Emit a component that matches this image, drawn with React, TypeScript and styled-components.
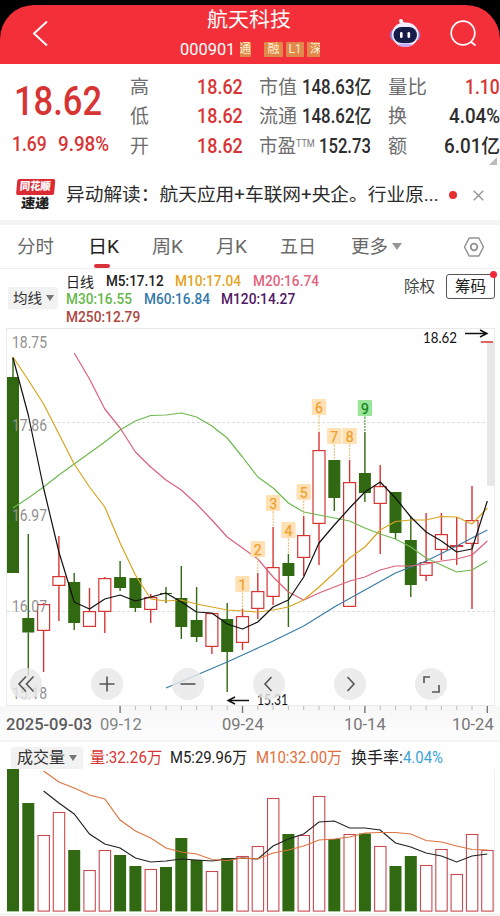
import React, { useLayoutEffect, useRef, useState } from "react";
import styled, { createGlobalStyle } from "styled-components";

const Global = createGlobalStyle`
  * { box-sizing: border-box; }
  body { margin: 0; background: #fff; font-family: Roboto, "Noto Sans CJK SC", sans-serif; color: #333; }
  button { font: inherit; color: inherit; border: 0; padding: 0; background: none; }
`;

const RED = "#d73434";
const GREEN = "#306911";

/* ---------- text that is condensed to a given width ---------- */

const FitBox = styled.span<{ $w: number; $size: number; $color?: string; $weight?: number }>`
  display: block;
  flex: none;
  width: ${(p) => p.$w}px;
  height: 18px;
  line-height: 18px;
  font-size: ${(p) => p.$size}px;
  font-weight: ${(p) => p.$weight ?? 400};
  color: ${(p) => p.$color ?? "inherit"};
  white-space: nowrap;
`;
const FitInner = styled.span`
  display: inline-block;
  transform-origin: 0 50%;
`;

type FitProps = { w: number; size: number; color?: string; weight?: number; children: React.ReactNode };
function Fit({ w, size, color, weight, children }: FitProps) {
  const ref = useRef<HTMLSpanElement>(null);
  const [k, setK] = useState(1);
  useLayoutEffect(() => {
    if (ref.current) setK(w / ref.current.offsetWidth);
  }, [w, size, children]);
  return (
    <FitBox $w={w} $size={size} $color={color} $weight={weight}>
      <FitInner ref={ref} style={{ transform: `scaleX(${k})` }}>{children}</FitInner>
    </FitBox>
  );
}

/* ---------- header ---------- */

const Page = styled.main`
  width: 500px;
  height: 916px;
  overflow: hidden;
  display: flex;
  flex-direction: column;
  background: #fff;
`;
const TopFrame = styled.div`
  background: #000;
  padding-top: 5px;
  flex: none;
`;
const Header = styled.header`
  height: 59px;
  background: #f32f3a;
  border-radius: 34px 34px 0 0;
  display: grid;
  grid-template-columns: 180px 140px 70px 58px 52px;
  align-items: center;
`;
const BackButton = styled.button`
  margin-left: 31px;
  width: 18px;
  height: 28px;
  margin-top: -4px;
`;
const TitleBlock = styled.div`
  height: 59px;
  color: #fff;
  overflow: hidden;
`;
const TitleLine = styled.div`
  padding: 6px 0 0 27px;
  height: 35px;
`;
const CodeLine = styled.div`
  display: flex;
  align-items: center;
  height: 18px;
`;
const Tag = styled.span<{ $w: number; $ml: number; $shift?: number }>`
  flex: none;
  width: ${(p) => p.$w}px;
  height: 15px;
  margin-left: ${(p) => p.$ml}px;
  border-radius: 1px;
  background: #e1894b;
  color: #ffeed0;
  font-size: 12px;
  line-height: 15px;
  overflow: hidden;
  display: flex;
  justify-content: ${(p) => (p.$shift ? "flex-start" : "center")};
  text-indent: ${(p) => p.$shift ?? 0}px;
`;
const HeadIcon = styled.button`
  height: 32px;
  margin-top: -4px;
`;

/* ---------- quote ---------- */

const Quote = styled.section`
  height: 101px;
  flex: none;
  display: grid;
  grid-template-columns: 130px 129px 129px 112px;
  position: relative;
`;
const PriceCell = styled.div`
  padding: 29px 0 0 14px;
`;
const ChangeRow = styled.div`
  display: flex;
  gap: 11px;
  margin: 24.5px 0 0 -2px;
`;
const QuoteCol = styled.div`
  padding-top: 14.5px;
`;
const QuoteRow = styled.div<{ $end: number }>`
  display: flex;
  height: 29.5px;
  justify-content: space-between;
  padding-right: ${(p) => p.$end}px;
`;
const CornerMark = styled.i`
  position: absolute;
  right: 3px;
  bottom: 0;
  border-left: 8px solid transparent;
  border-bottom: 8px solid #bbb;
`;
const LabelWithSup = styled.span`
  display: flex;
`;
const Sup = styled.span`
  display: block;
  height: 10px;
  margin-top: -3px;
`;

/* ---------- news ---------- */

const News = styled.section`
  height: 60px;
  flex: none;
  display: flex;
  align-items: center;
  border-bottom: 5px solid #f4f4f5;
  padding: 5px 0 0 16px;
`;
const Brand = styled.div`
  width: 38px;
  height: 32px;
  margin-right: 12px;
  transform: skewX(-5deg);
`;
const BrandTop = styled.div`
  height: 16px;
  background: #dc2b32;
  border-radius: 2px;
  color: #fff;
  padding-left: 3px;
  display: flex;
  align-items: center;
`;
const BrandBottom = styled.div`
  height: 15px;
  padding-left: 6px;
  display: flex;
  align-items: center;
  color: #222;
`;
const NewsDot = styled.i`
  width: 8px;
  height: 8px;
  border-radius: 50%;
  background: #e5302f;
  margin: 0 16px 0 10px;
`;

/* ---------- tabs ---------- */

const Tabs = styled.nav`
  height: 44px;
  flex: none;
  display: flex;
  align-items: center;
  padding-left: 17px;
  border-bottom: 1px solid #eee;
`;
const Tab = styled.button<{ $gap: number; $active?: boolean }>`
  height: 43px;
  margin-right: ${(p) => p.$gap}px;
  color: ${(p) => (p.$active ? "#222" : "#696969")};
  display: flex;
  flex-direction: column;
  align-items: center;
  padding-top: 13px;
  text-align: left;
`;
const Underline = styled.i`
  width: 16px;
  height: 4px;
  border-radius: 2px;
  background: #d9323a;
  margin-top: 8px;
  margin-right: 4px;
`;
const Caret = styled.i<{ $s: number; $color: string }>`
  flex: none;
  border: ${(p) => p.$s}px solid transparent;
  border-top: ${(p) => p.$s * 1.5}px solid ${(p) => p.$color};
  border-bottom: 0;
`;
const HexButton = styled.button`
  margin-left: 61px;
  width: 22px;
  height: 22px;
`;

/* ---------- indicator legend ---------- */

const Legend = styled.section`
  height: 59px;
  flex: none;
  display: flex;
  padding-left: 8px;
`;
const Pill = styled.button<{ $w: number; $h: number }>`
  width: ${(p) => p.$w}px;
  height: ${(p) => p.$h}px;
  border-radius: 2px;
  background: #f2f2f2;
  display: flex;
  align-items: center;
  justify-content: center;
  gap: 4px;
  flex: none;
  text-align: left;
`;
const LegendPill = styled(Pill)`
  margin: 18px 8px 0 0;
`;
const LegendLines = styled.div`
  width: 338px;
  padding-top: 4px;
`;
const LegendLine = styled.div`
  display: flex;
  gap: 11.5px;
`;
const Rights = styled.div`
  padding-top: 9px;
  width: 42px;
`;
const ChipButton = styled.button`
  position: relative;
  margin-top: 5px;
  width: 49px;
  height: 25px;
  border: 1px solid #555;
  border-radius: 3px;
  display: flex;
  justify-content: center;
  align-items: center;
`;
const ChipDot = styled.i`
  position: absolute;
  top: -4px;
  right: -3px;
  width: 7px;
  height: 7px;
  border-radius: 50%;
  background: #f3293b;
`;

/* ---------- charts ---------- */

const ChartArea = styled.section`
  height: 378px;
  flex: none;
  position: relative;
`;
const Drawing = styled.svg`
  display: block;
  flex: none;
  overflow: visible;
  font-family: Roboto, sans-serif;
`;
const Controls = styled.div`
  position: absolute;
  left: 10px;
  top: 340px;
  display: flex;
  gap: 49px;
`;
const RoundButton = styled.button`
  width: 32px;
  height: 32px;
  border-radius: 50%;
  background: rgba(232, 232, 232, 0.82);
  display: block;
`;
const DateAxis = styled.div`
  height: 36px;
  flex: none;
  background: linear-gradient(#f7f7f7, #fdfdfd);
  border-bottom: 2px solid #f3f3f3;
`;
const Dates = styled.div`
  display: flex;
  padding-left: 6px;
  margin-top: 1px;
`;
const DateSlot = styled.div<{ $gap: number }>`
  margin-right: ${(p) => p.$gap}px;
`;
const VolumeHead = styled.div`
  height: 27px;
  flex: none;
  display: flex;
  align-items: center;
  padding: 4px 0 0 11px;
`;
const VolumeItem = styled.div<{ $ml: number }>`
  margin-left: ${(p) => p.$ml}px;
  display: flex;
`;

const X0 = 13;
const STEP = 15.3;
const cx = (i: number) => X0 + STEP * i;
const path = (ys: number[], from = 0) =>
  ys.map((y, i) => `${cx(i + from).toFixed(1)},${y}`).join(" ");

/* direction, high, body top, body bottom, low (pixel rows) */
type Candle = [number, number, number, number, number];
const candles: Candle[] = [
  [0, 357, 377, 573, 573], [0, 534, 618, 632.5, 676], [1, 604, 608, 636, 677], [1, 536, 576, 586, 621],
  [0, 573, 582, 623, 630], [1, 588, 611, 627, 627], [1, 577, 578, 612, 633], [0, 561, 577, 588, 591],
  [0, 578, 578, 608, 612], [1, 594, 597, 610, 623], [0, 587, 593, 594, 603], [0, 566, 598, 627, 639],
  [0, 587, 620, 637, 642], [1, 613, 613, 647, 654], [0, 603, 619, 652, 692], [1, 609, 616, 643, 650],
  [1, 573, 591, 609, 619], [1, 527, 567, 597, 605], [0, 554, 563, 576, 627], [1, 516, 535, 558, 576],
  [1, 432, 450, 524, 565], [0, 460, 460, 498, 511], [1, 460, 482, 607, 607], [0, 432, 473, 493, 502],
  [1, 465, 486, 504, 554], [0, 492, 492, 533, 539], [0, 516, 540, 585, 597], [1, 513, 562, 576, 581],
  [1, 513, 534, 550, 560], [1, 517, 545, 547, 565], [1, 486, 520, 544, 609],
];
candles[2] = [1, 603, 604, 631, 672];

const ma5 = [358, 415, 488, 552, 602, 609, 599, 595, 601, 597, 593, 602, 612, 613, 624, 629, 622, 607, 600, 577, 543, 525, 508, 492, 482, 498, 517, 532, 541, 552, 549, 501];
const ma10 = [357, 380, 404, 434, 464, 487, 507, 543, 575, 599, 601, 600, 604, 607, 610, 611, 612, 610, 607, 600, 587, 573, 558, 547, 530, 521.5, 520, 520, 516.5, 517, 524, 508];
const ma20 = [353, 379, 409, 428, 452, 467, 480, 490, 504, 520, 537, 548, 559, 577, 592, 600, 593, 587, 581, 577, 570, 566, 566, 564, 561, 559, 555, 541];
const ma30 = [508, 498, 487, 475, 464, 453, 442, 430, 421, 415.5, 415, 413, 417, 426, 438, 457, 477, 488, 503, 512, 515, 518, 521, 528, 534, 539, 547, 558, 565, 572, 570, 561];
const ma60 = [688, 681.5, 675, 668.5, 662, 655, 648, 641, 633.5, 626, 616.5, 607, 598.5, 590, 581.5, 573, 567, 561, 553.5, 546, 538, 530];

/* label, bar index, top of badge, end of dotted leader */
const badges: [string, number, number, number][] = [
  ["1", 15, 576, 609], ["2", 16, 541, 573], ["3", 17, 495, 527], ["4", 18, 522, 554], ["5", 19, 484, 516],
  ["6", 20, 399, 432], ["7", 21, 428, 460], ["8", 22, 428, 460], ["9", 23, 400, 432],
];
const scale: [string, number][] = [["18.75", 348], ["17.86", 431], ["16.97", 521], ["16.07", 612], ["15.18", 698.5]];

function PriceChart() {
  return (
    <Drawing width="500" height="378" viewBox="0 328 500 378">
      <path d="M6 328.5H494.5V705.5H6.5V328.5" fill="none" stroke="#e9e9e9" />
      <path d="M7 422.5H494M7 611.5H494" stroke="#dedede" strokeDasharray="3 2" />
      <rect x="487" y="342" width="7" height="144" fill="#e7e7e7" />
      {candles.map(([up, hi, top, bot, lo], i) => {
        const x = cx(i);
        const c = up ? RED : GREEN;
        return (
          <g key={i} stroke={c} strokeWidth="1.4">
            <path d={`M${x} ${hi}V${top}M${x} ${bot}V${lo}`} />
            {up ? (
              <rect x={x - 6} y={top + 0.6} width="12" height={Math.max(bot - top - 1.2, 0.8)} fill="#fff" strokeWidth="1.2" />
            ) : (
              <rect x={x - 6} y={top} width="12" height={bot - top} fill={GREEN} stroke="none" />
            )}
          </g>
        );
      })}
      <path d="M481 342H493" stroke={RED} strokeWidth="1.5" />
      <g fill="#909090" fontSize="16">
        {scale.map(([t, y]) => (
          <text key={t} x="12" y={y} textLength="35" lengthAdjust="spacingAndGlyphs">{t}</text>
        ))}
      </g>
      <g fill="none" strokeWidth="1.2" strokeLinejoin="round">
        <polyline points={path(ma60, 10)} stroke="#397da5" />
        <polyline points={path(ma30)} stroke="#6fb84f" />
        <polyline points={path(ma20, 4)} stroke="#dc617c" />
        <polyline points={path(ma10)} stroke="#d9a520" />
        <polyline points={path(ma5)} stroke="#111" />
      </g>
      {badges.map(([t, i, y, end]) => {
        const x = cx(i);
        const green = t === "9";
        return (
          <g key={t}>
            <path d={`M${x} ${y + 17}V${end}`} stroke={green ? "#306911" : "#e9b660"} strokeWidth="0.9" strokeDasharray="2 1" />
            <path
              d={`M${x - 6} ${y}h12q1.2 0 1.2 1.2v13.6q0 1.2-1.2 1.2h-4.5l-1.5 1.8l-1.5-1.8h-4.5q-1.2 0-1.2-1.2v-13.6q0-1.2 1.2-1.2z`}
              fill={green ? "#9be59a" : "#ffe1b5"}
            />
            <text x={x} y={y + 13.5} textAnchor="middle" fontSize="14" fontWeight="400" stroke={green ? "#0f851c" : "#efa02e"} strokeWidth="0.25" fill={green ? "#0f851c" : "#efa02e"}>{t}</text>
          </g>
        );
      })}
      <g fontFamily="Lato, sans-serif" fontSize="15" fill="#111">
        <text x="423" y="342.5" textLength="34" lengthAdjust="spacingAndGlyphs">18.62</text>
        <text x="257" y="705" textLength="31" lengthAdjust="spacingAndGlyphs">15.31</text>
      </g>
      <path d="M465 333.5H487M480 330L487 333.5L480 337M249 700.5H228M235 697L228 700.5L235 704" fill="none" stroke="#111" strokeWidth="1.4" />
    </Drawing>
  );
}

function Ticks() {
  return (
    <Drawing width="500" height="9" viewBox="0 706 500 9">
      {Array.from({ length: 25 }, (_, n) => n + 7).map((i) => {
        const major = (i - 7) % 8 === 0;
        return <path key={i} d={`M${cx(i)} 706V${major ? 713 : 710}`} stroke={major ? "#777" : "#bbb"} strokeWidth={major ? 1.4 : 1} />;
      })}
    </Drawing>
  );
}

const volTops = [769, 803, 835, 812, 850, 870, 850, 855, 866, 869, 867, 838, 860, 871, 858, 856, 846, 798, 834, 835, 796, 839, 834, 833.5, 846, 866, 856, 865, 849, 874, 834, 850];
const vol5 = [791, 803, 814, 834, 844, 848, 858, 862, 861, 859, 860, 861, 859, 858, 859, 846, 839, 834, 822, 821, 828, 828, 830, 843, 847, 853, 856, 862, 856, 854];
const vol10 = [771, 782, 788, 795, 799, 820, 831, 838, 848, 852, 854, 859.5, 860.5, 858, 859, 853, 850, 846, 840, 839, 837, 833, 832.5, 832.5, 834, 840.5, 842, 846, 849.5, 850];

function VolumeChart() {
  return (
    <Drawing width="500" height="147" viewBox="0 769 500 147">
      <path d="M494.5 769V914" stroke="#f1f1f1" />
      <path d="M0 914.5H500" stroke="#f2f2f2" strokeWidth="2" />
      {volTops.map((y, i) => {
        const up = i === 31 || candles[i][0] === 1;
        return up ? (
          <rect key={i} x={cx(i) - 5.6} y={y + 0.5} width="11.4" height={910.6 - y} fill="#fff" stroke="#c94a50" strokeWidth="1.1" />
        ) : (
          <rect key={i} x={cx(i) - 6} y={y} width="12" height={911.4 - y} fill={GREEN} />
        );
      })}
      <polyline points={path(vol5, 2)} fill="none" stroke="#222" strokeWidth="1.15" />
      <polyline points={path(vol10, 2)} fill="none" stroke="#dd7440" strokeWidth="1.15" />
    </Drawing>
  );
}

const controlPaths = [
  "M16 8.5L9 16L16 23.5M23.5 8.5L16.5 16L23.5 23.5",
  "M16 8.5V23.5M8.5 16H23.5",
  "M8.5 16H23.5",
  "M18.5 9L12 16L18.5 23",
  "M13.5 9L20 16L13.5 23",
  "M9 15V9H15M24 17V24H17",
];

type Cell = readonly [label: string, labelWidth: number, value: string, valueWidth: number, color: string];
const INK = "#2d2d2d";
const quoteColumns: { end: number; cells: Cell[] }[] = [
  { end: 16, cells: [["高", 19, "18.62", 46, RED], ["低", 19, "18.62", 46, RED], ["开", 19, "18.62", 46, RED]] },
  { end: 17, cells: [["市值", 38, "148.63亿", 69, INK], ["流通", 38, "148.62亿", 69, INK], ["市盈", 37, "152.73", 52, INK]] },
  { end: 0, cells: [["量比", 39, "1.10", 35, RED], ["换", 19, "4.04%", 51, INK], ["额", 19, "6.01亿", 56, INK]] },
];

export default function App() {
  return (
    <>
      <Global />
      <Page>
        <TopFrame>
          <Header>
            <BackButton>
              <svg width="18" height="28" viewBox="0 0 18 28" fill="none" stroke="#fff" strokeWidth="1.9">
                <path d="M16 2.5L3 14.5L16 26.5" />
              </svg>
            </BackButton>
            <TitleBlock>
              <TitleLine><Fit w={84} size={20.5}>航天科技</Fit></TitleLine>
              <CodeLine>
                <Fit w={55} size={17}>000901</Fit>
                <Tag $w={11} $ml={5} $shift={-1}>通</Tag>
                <Tag $w={19} $ml={13}>融</Tag>
                <Tag $w={18} $ml={3}>L1</Tag>
                <Tag $w={13} $ml={3} $shift={3}>深</Tag>
              </CodeLine>
            </TitleBlock>
            <span />
            <HeadIcon>
              <svg width="58" height="32" viewBox="390 17 58 32">
                <path d="M405 24Q403 22 400.5 21.5" stroke="#fff" strokeWidth="1.6" fill="none" />
                <circle cx="401" cy="21" r="2" fill="#fff" />
                <rect x="390.3" y="29" width="29.6" height="12" rx="5" fill="#8790ec" />
                <rect x="392" y="22.5" width="26.5" height="24" rx="12" fill="#f4edff" />
                <ellipse cx="405" cy="45" rx="7" ry="1.8" fill="#c2adf5" />
                <rect x="393.5" y="27" width="23.5" height="16" rx="8" fill="#171d49" />
                <rect x="400" y="32" width="2.6" height="6" rx="1.3" fill="#fff" />
                <rect x="407.5" y="32" width="2.6" height="6" rx="1.3" fill="#fff" />
              </svg>
            </HeadIcon>
            <HeadIcon>
              <svg width="52" height="32" viewBox="448 17 52 32" fill="none" stroke="#fff" strokeWidth="1.7">
                <circle cx="463" cy="33" r="11.8" />
                <path d="M470.5 41.5L475.5 45.5" />
              </svg>
            </HeadIcon>
          </Header>
        </TopFrame>

        <Quote>
          <PriceCell>
            <Fit w={88} size={40} weight={500} color={RED}>18.62</Fit>
            <ChangeRow>
              <Fit w={35} size={19.5} weight={500} color={RED}>1.69</Fit>
              <Fit w={51} size={19.5} weight={500} color={RED}>9.98%</Fit>
            </ChangeRow>
          </PriceCell>
          {quoteColumns.map(({ end, cells }, n) => (
            <QuoteCol key={n}>
              {cells.map(([l, lw, v, vw, c]) => (
                <QuoteRow key={l} $end={end}>
                  <LabelWithSup>
                    <Fit w={lw} size={19} color="#6d6d6d">{l}</Fit>
                    {l === "市盈" && <Sup><Fit w={19} size={10} color="#777">TTM</Fit></Sup>}
                  </LabelWithSup>
                  <Fit w={vw} size={19.5} weight={500} color={c}>{v}</Fit>
                </QuoteRow>
              ))}
            </QuoteCol>
          ))}
          <CornerMark />
        </Quote>

        <News>
          <Brand>
            <BrandTop><Fit w={31} size={11} weight={900}>同花顺</Fit></BrandTop>
            <BrandBottom><Fit w={28} size={13.5} weight={900}>速递</Fit></BrandBottom>
          </Brand>
          <Fit w={373} size={18} color="#2b2b2b">异动解读：航天应用+车联网+央企。行业原...</Fit>
          <NewsDot />
          <svg width="11" height="11" viewBox="0 0 11 11" stroke="#929292" strokeWidth="1.3"><path d="M.7 .7L10.3 10.3M10.3 .7L.7 10.3" /></svg>
        </News>

        <Tabs>
          <Tab $gap={34}><Fit w={37} size={18.5}>分时</Fit></Tab>
          <Tab $gap={33} $active><Fit w={31} size={18.5}>日K</Fit><Underline /></Tab>
          <Tab $gap={33}><Fit w={31} size={18.5}>周K</Fit></Tab>
          <Tab $gap={33}><Fit w={31} size={18.5}>月K</Fit></Tab>
          <Tab $gap={35}><Fit w={36} size={18.5}>五日</Fit></Tab>
          <Tab $gap={4}><Fit w={37} size={18.5}>更多</Fit></Tab>
          <Caret $s={5} $color="#969696" />
          <HexButton>
            <svg width="22" height="22" viewBox="0 0 22 22" fill="none" stroke="#929292" strokeWidth="1.5">
              <path d="M6.2 2H15.8L20.5 11L15.8 20H6.2L1.5 11Z" strokeLinejoin="round" />
              <circle cx="11" cy="11" r="3.3" strokeWidth="1.8" />
            </svg>
          </HexButton>
        </Tabs>

        <Legend>
          <LegendPill $w={50} $h={22}>
            <Fit w={29} size={14} color="#333">均线</Fit>
            <Caret $s={4} $color="#777" />
          </LegendPill>
          <LegendLines>
            <LegendLine>
              <Fit w={28} size={14} color="#222">日线</Fit>
              <Fit w={58} size={14.5} weight={500} color="#222">M5:17.12</Fit>
              <Fit w={66} size={14.5} weight={500} color="#e2a41c">M10:17.04</Fit>
              <Fit w={66} size={14.5} weight={500} color="#e2647c">M20:16.74</Fit>
            </LegendLine>
            <LegendLine>
              <Fit w={66} size={14.5} weight={500} color="#68b84b">M30:16.55</Fit>
              <Fit w={66} size={14.5} weight={500} color="#357aa8">M60:16.84</Fit>
              <Fit w={74} size={14.5} weight={500} color="#4f1863">M120:14.27</Fit>
            </LegendLine>
            <LegendLine><Fit w={74} size={14.5} weight={500} color="#ad4740">M250:12.79</Fit></LegendLine>
          </LegendLines>
          <Rights><Fit w={31} size={15.5} color="#444">除权</Fit></Rights>
          <ChipButton><Fit w={31} size={15.5} color="#222">筹码</Fit><ChipDot /></ChipButton>
        </Legend>

        <ChartArea>
          <PriceChart />
          <Controls>
            {controlPaths.map((d, i) => (
              <RoundButton key={i}>
                <svg width="32" height="32" viewBox="0 0 32 32" fill="none" stroke="#555" strokeWidth="1.6"><path d={d} /></svg>
              </RoundButton>
            ))}
          </Controls>
        </ChartArea>

        <DateAxis>
          <Ticks />
          <Dates>
            <DateSlot $gap={8}><Fit w={86} size={16.5} weight={500} color="#5c5c5c">2025-09-03</Fit></DateSlot>
            <DateSlot $gap={80}><Fit w={42} size={16.5} color="#858585">09-12</Fit></DateSlot>
            <DateSlot $gap={80}><Fit w={42} size={16.5} color="#777">09-24</Fit></DateSlot>
            <DateSlot $gap={66}><Fit w={42} size={16.5} color="#777">10-14</Fit></DateSlot>
            <DateSlot $gap={0}><Fit w={42} size={16.5} color="#777">10-24</Fit></DateSlot>
          </Dates>
        </DateAxis>

        <VolumeHead>
          <Pill $w={72} $h={22}>
            <Fit w={48} size={16} color="#333">成交量</Fit>
            <Caret $s={4} $color="#777" />
          </Pill>
          <VolumeItem $ml={7}><Fit w={72} size={16} color={RED}>量:32.26万</Fit></VolumeItem>
          <VolumeItem $ml={8}><Fit w={77} size={16} color="#222">M5:29.96万</Fit></VolumeItem>
          <VolumeItem $ml={9}><Fit w={86} size={16} color="#e36e3c">M10:32.00万</Fit></VolumeItem>
          <VolumeItem $ml={9}>
            <Fit w={52} size={16} color="#222">换手率:</Fit>
            <Fit w={40} size={16} color="#3ba4d8">4.04%</Fit>
          </VolumeItem>
        </VolumeHead>
        <VolumeChart />
      </Page>
    </>
  );
}
